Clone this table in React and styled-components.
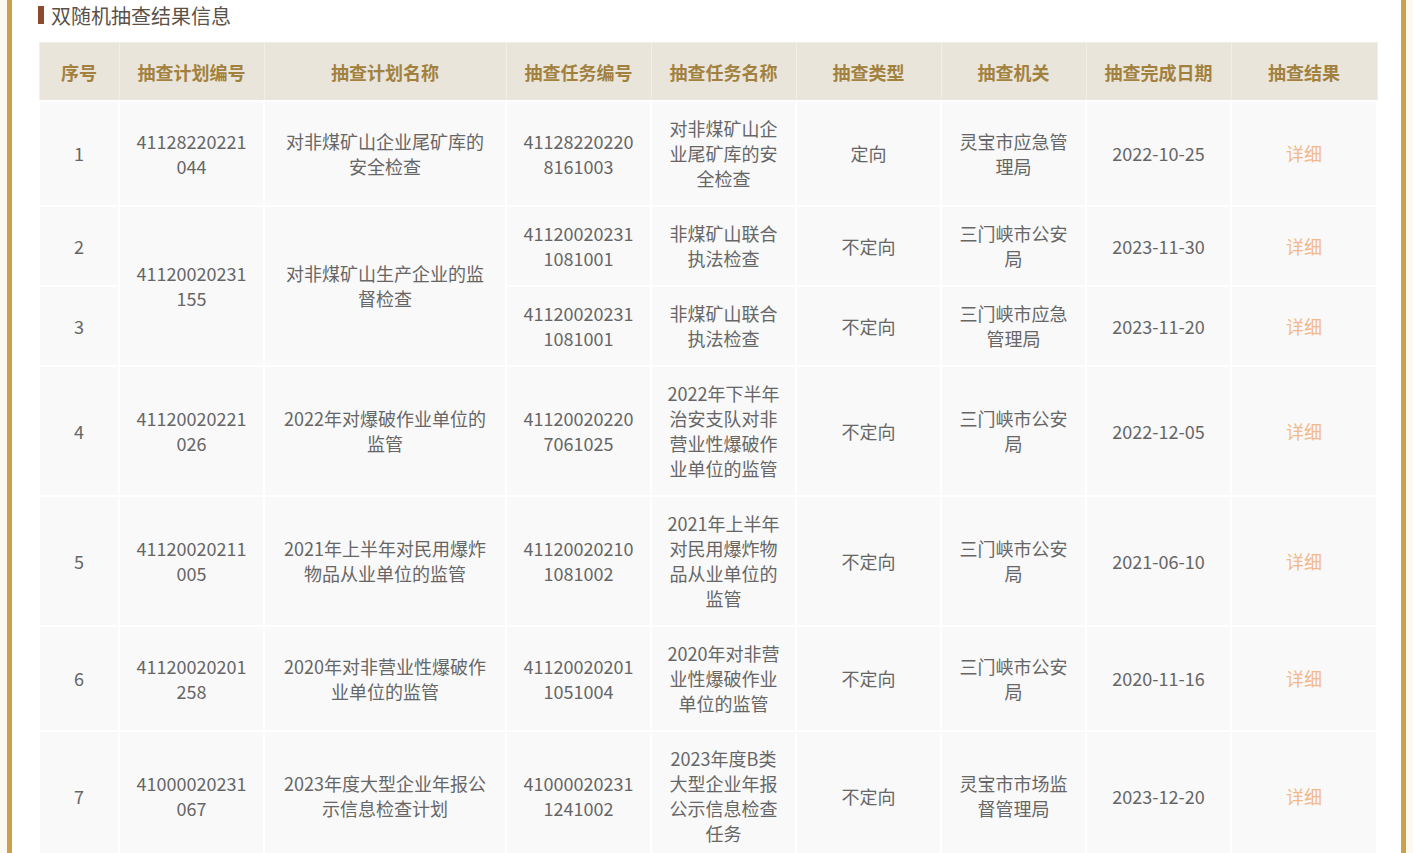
import React from 'react'
import styled, { createGlobalStyle } from 'styled-components'

const GlobalStyle = createGlobalStyle`
  html, body {
    margin: 0;
    padding: 0;
    background: #fdf9f0;
  }
  body {
    font-family: "Noto Sans CJK SC", "Microsoft YaHei", sans-serif;
  }
`

const Page = styled.div`
  margin: 0 7px;
  min-height: 853px;
  background: #fff;
  border-left: 5px solid #c9a14f;
  border-right: 5px solid #c9a14f;
  padding: 0 27px 0 26px;
`

const Title = styled.h3`
  margin: 0 0 12px;
  height: 30px;
  display: flex;
  align-items: center;
  font-size: 20px;
  font-weight: 400;
  color: #5b5148;
  &::before {
    content: '';
    width: 6px;
    height: 18px;
    margin-right: 7px;
    background: #8b4b2c;
  }
`

const Table = styled.table`
  width: 100%;
  border-collapse: collapse;
  table-layout: fixed;
`

const Th = styled.th`
  height: 57px;
  background: #e9e5db;
  color: #a2813e;
  font-size: 18px;
  font-weight: 700;
  border: 1px solid #f2efe9;
  border-bottom: 2px solid #fff;
  padding: 0 8px;
`

const Td = styled.td`
  background: #f9f9f9;
  border: 2px solid #fff;
  padding: 14px 15px;
  text-align: center;
  vertical-align: middle;
  font-size: 18px;
  line-height: 25px;
  color: #666;
  word-break: break-all;
`

const Detail = styled.a`
  color: #f2b98a;
  text-decoration: none;
  cursor: pointer;
`

const cols = [80, 145, 242, 145, 145, 145, 145, 145, 146]
const heads = ['序号', '抽查计划编号', '抽查计划名称', '抽查任务编号', '抽查任务名称', '抽查类型', '抽查机关', '抽查完成日期', '抽查结果']

const rows = [
  { no: 1, plan: '41128220221044', name: '对非煤矿山企业尾矿库的安全检查', task: '411282202208161003', tname: '对非煤矿山企业尾矿库的安全检查', type: '定向', org: '灵宝市应急管理局', date: '2022-10-25' },
  { no: 2, plan: '41120020231155', name: '对非煤矿山生产企业的监督检查', span: 2, task: '411200202311081001', tname: '非煤矿山联合执法检查', type: '不定向', org: '三门峡市公安局', date: '2023-11-30' },
  { no: 3, skip: true, task: '411200202311081001', tname: '非煤矿山联合执法检查', type: '不定向', org: '三门峡市应急管理局', date: '2023-11-20' },
  { no: 4, plan: '41120020221026', name: '2022年对爆破作业单位的监管', task: '411200202207061025', tname: '2022年下半年治安支队对非营业性爆破作业单位的监管', type: '不定向', org: '三门峡市公安局', date: '2022-12-05' },
  { no: 5, plan: '41120020211005', name: '2021年上半年对民用爆炸物品从业单位的监管', task: '411200202101081002', tname: '2021年上半年对民用爆炸物品从业单位的监管', type: '不定向', org: '三门峡市公安局', date: '2021-06-10' },
  { no: 6, plan: '41120020201258', name: '2020年对非营业性爆破作业单位的监管', task: '411200202011051004', tname: '2020年对非营业性爆破作业单位的监管', type: '不定向', org: '三门峡市公安局', date: '2020-11-16' },
  { no: 7, plan: '41000020231067', name: '2023年度大型企业年报公示信息检查计划', task: '410000202311241002', tname: '2023年度B类大型企业年报公示信息检查任务', type: '不定向', org: '灵宝市市场监督管理局', date: '2023-12-20' },
]

export default function App() {
  return (
    <>
      <GlobalStyle />
      <Page>
        <Title>双随机抽查结果信息</Title>
        <Table>
          <colgroup>
            {cols.map((w, i) => <col key={i} style={{ width: w }} />)}
          </colgroup>
          <thead>
            <tr>{heads.map(h => <Th key={h}>{h}</Th>)}</tr>
          </thead>
          <tbody>
            {rows.map(r => (
              <tr key={r.no}>
                <Td>{r.no}</Td>
                {!r.skip && <Td rowSpan={r.span || 1}>{r.plan}</Td>}
                {!r.skip && <Td rowSpan={r.span || 1}>{r.name}</Td>}
                <Td>{r.task}</Td>
                <Td>{r.tname}</Td>
                <Td>{r.type}</Td>
                <Td>{r.org}</Td>
                <Td>{r.date}</Td>
                <Td><Detail>详细</Detail></Td>
              </tr>
            ))}
          </tbody>
        </Table>
      </Page>
    </>
  )
}
